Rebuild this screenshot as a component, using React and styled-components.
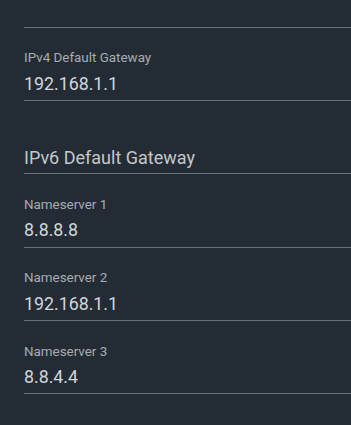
import React from 'react'
import styled, { createGlobalStyle } from 'styled-components'

const GlobalStyle = createGlobalStyle`
  html, body {
    margin: 0;
    padding: 0;
    background: #232c35;
  }
  body {
    font-family: Roboto, "Noto Sans", sans-serif;
    overflow: hidden;
  }
`

const fields = [
  { label: 'IPv4 Default Gateway', value: '192.168.1.1' },
  { label: 'IPv6 Default Gateway', value: '' },
  { label: 'Nameserver 1', value: '8.8.8.8' },
  { label: 'Nameserver 2', value: '192.168.1.1' },
  { label: 'Nameserver 3', value: '8.8.4.4' },
]

const App = () => {
  return (
    <>
      <GlobalStyle />
      <Page>
        <TopRule />
        {fields.map((f) => (
          <Field key={f.label} empty={!f.value}>
            {f.value ? (
              <>
                <Label>{f.label}</Label>
                <Value>{f.value}</Value>
              </>
            ) : (
              <Placeholder>{f.label}</Placeholder>
            )}
          </Field>
        ))}
      </Page>
    </>
  )
}

const Page = styled.div`
  width: 351px;
  height: 425px;
  padding-left: 24px;
  box-sizing: border-box;
  background: #232c35;
  display: flex;
  flex-direction: column;
  overflow: hidden;
`

const TopRule = styled.div`
  margin-top: 26.5px;
  height: 1px;
  flex-shrink: 0;
  background: #6a7077;
`

const Field = styled.div.withConfig({
  shouldForwardProp: (prop) => prop !== 'empty',
})`
  height: 73.4px;
  flex-shrink: 0;
  display: flex;
  flex-direction: column;
  justify-content: flex-end;
  border-bottom: 1px solid #6a7077;
  padding-bottom: ${(p) => (p.empty ? '6.6px' : '7.3px')};
  box-sizing: border-box;
`

const Label = styled.label`
  font-size: 13.4px;
  line-height: 15px;
  color: #a8acb0;
  margin-bottom: 8.3px;
`

const Value = styled.div`
  font-size: 17.8px;
  line-height: 19px;
  color: #d3d5d8;
`

const Placeholder = styled.div`
  font-size: 18px;
  line-height: 19px;
  color: #c4c7ca;
`

export default App
